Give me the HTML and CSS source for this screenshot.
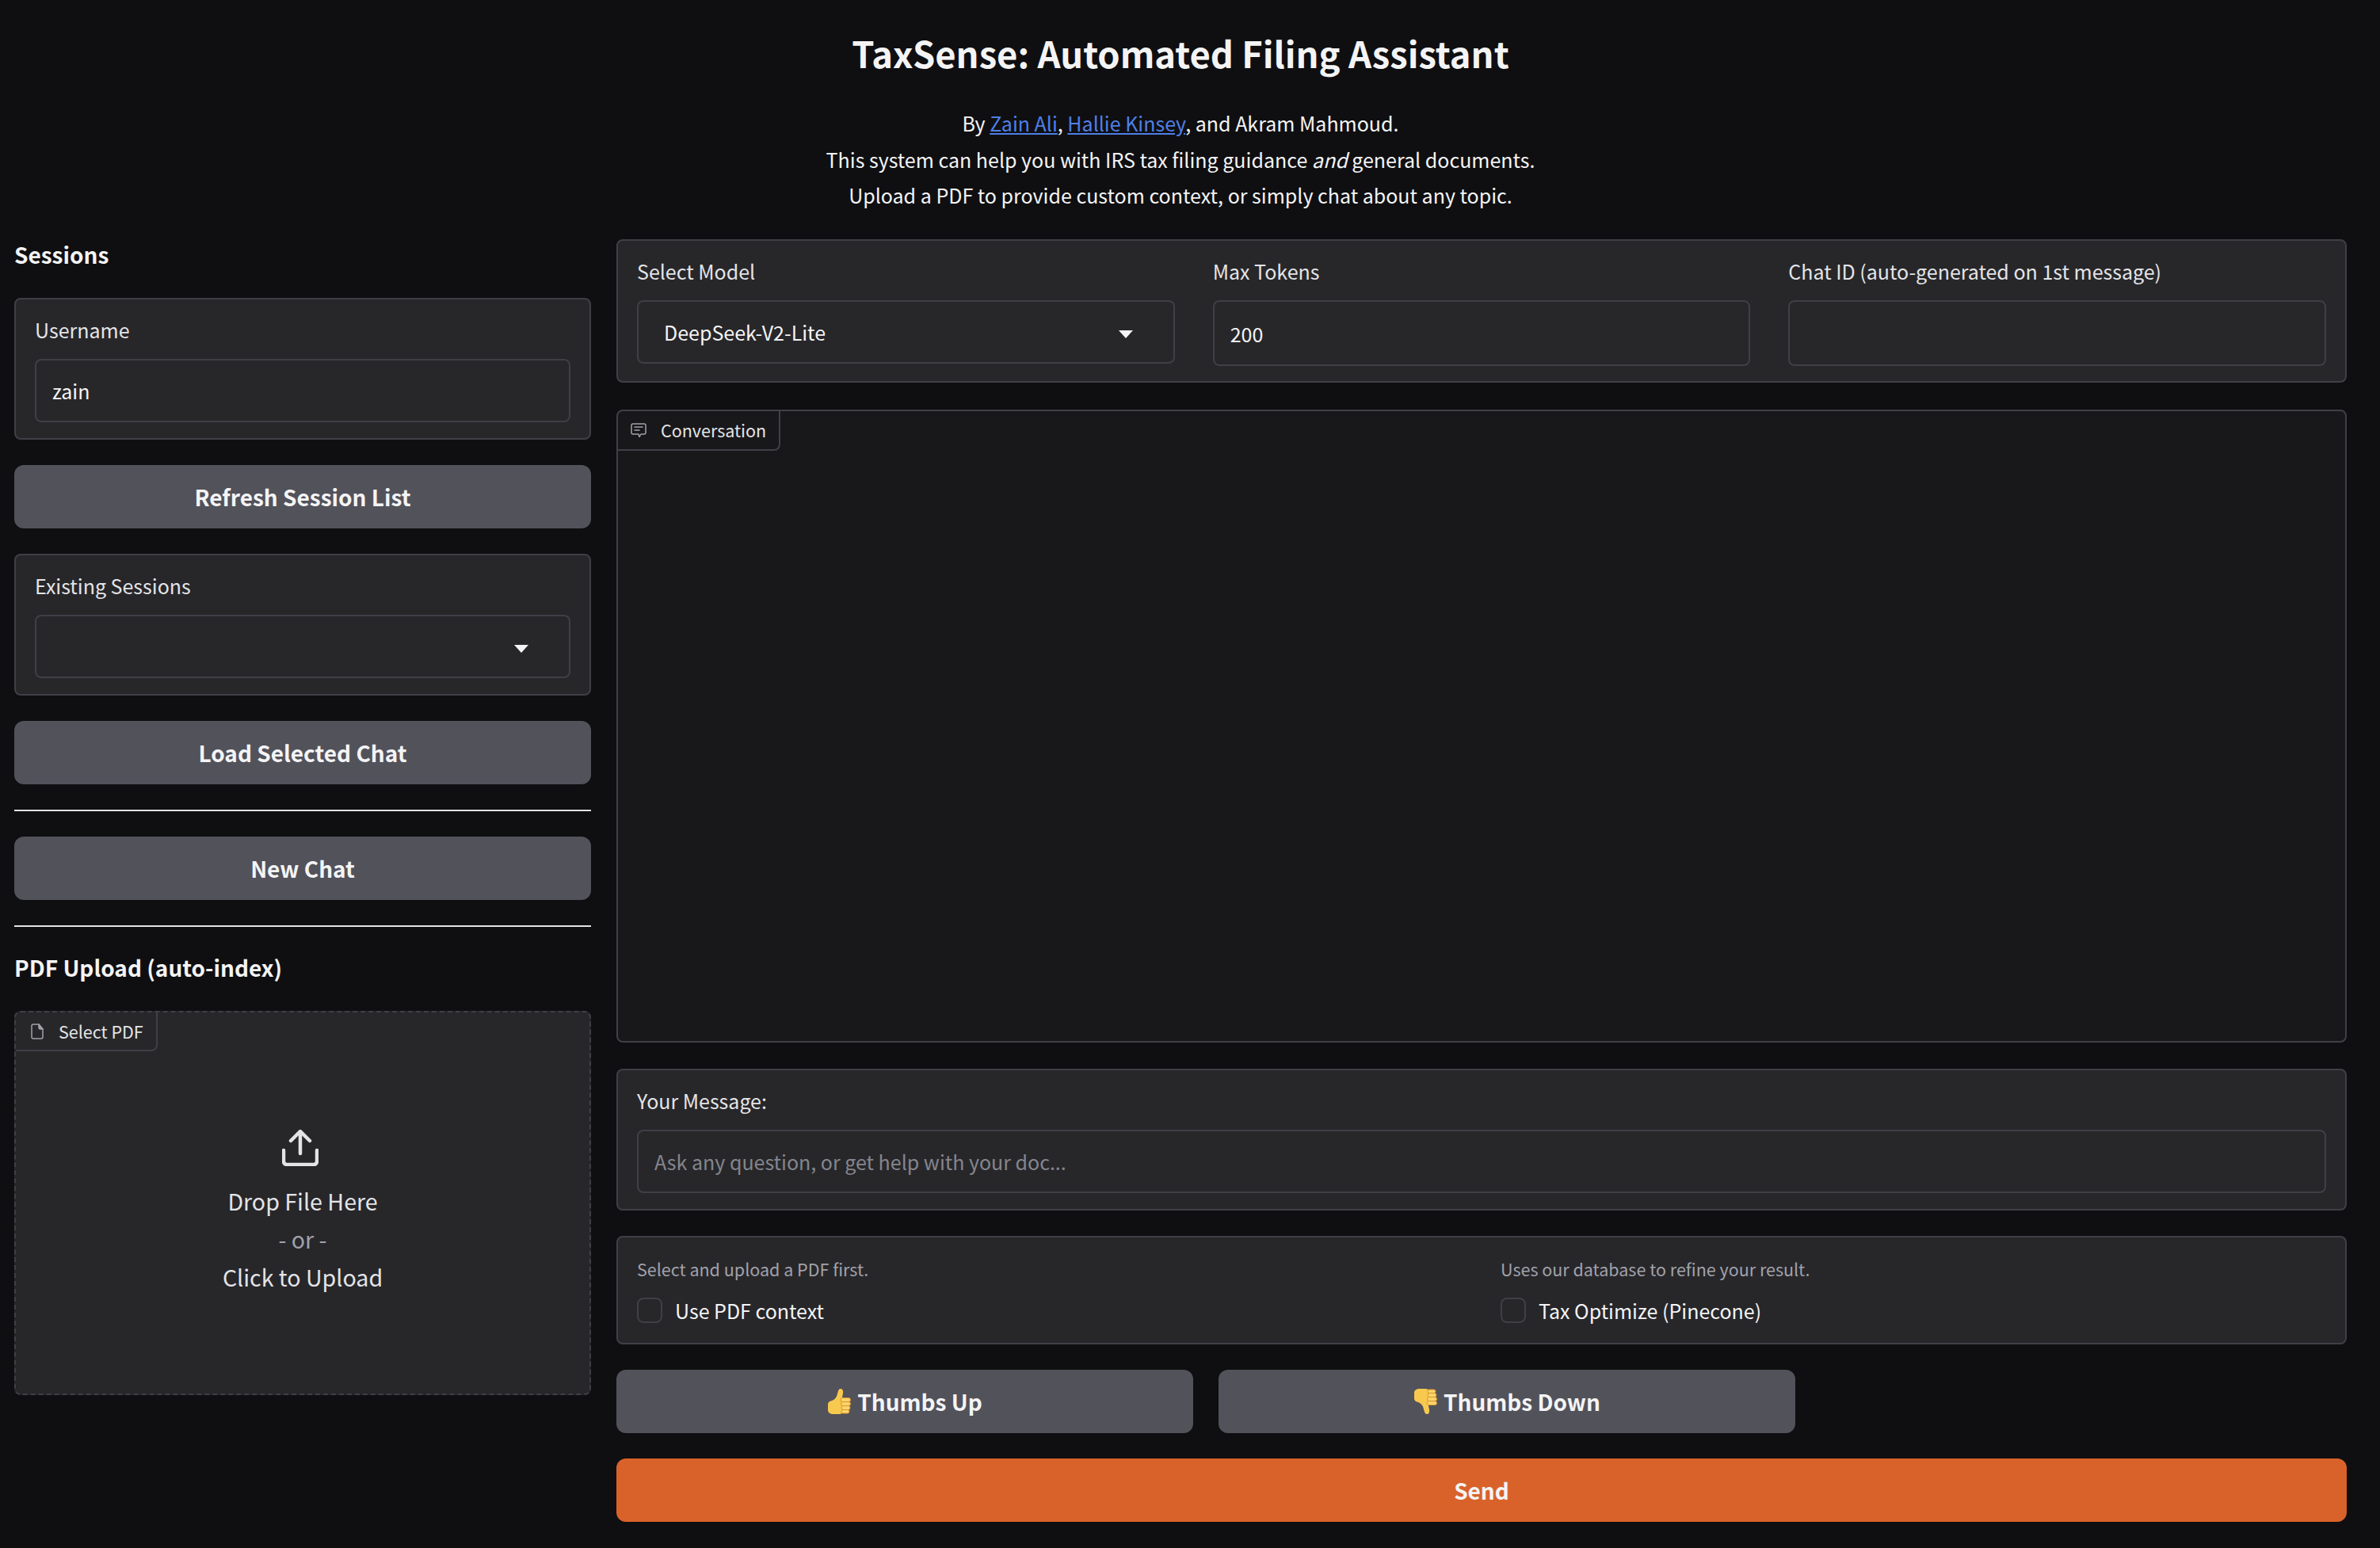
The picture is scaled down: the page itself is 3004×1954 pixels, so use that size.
FILE: index.html
```html
<!DOCTYPE html>
<html lang="en">
<head>
    <meta charset="UTF-8">
    <title>TaxSense: Automated Filing Assistant</title>
    <link rel="stylesheet" href="styles.css">
</head>
<body>

<header class="intro">
    <h1>TaxSense: Automated Filing Assistant</h1>
    <p>By <a href="#">Zain Ali</a>, <a href="#">Hallie Kinsey</a>, and Akram Mahmoud.</p>
    <p>This system can help you with IRS tax filing guidance <em>and</em> general documents.</p>
    <p>Upload a PDF to provide custom context, or simply chat about any topic.</p>
</header>

<div class="app">
    <aside class="sidebar">
        <h3 class="side-title">Sessions</h3>

        <div class="block">
            <label class="field-label">Username</label>
            <div class="input">zain</div>
        </div>

        <button class="btn">Refresh Session List</button>

        <div class="block">
            <label class="field-label">Existing Sessions</label>
            <div class="input select"><span></span><i class="caret"></i></div>
        </div>

        <button class="btn">Load Selected Chat</button>
        <hr class="rule">
        <button class="btn">New Chat</button>
        <hr class="rule">

        <h3 class="side-title">PDF Upload (auto-index)</h3>

        <div class="dropzone">
            <div class="tab file-tab">
                <svg class="file-icon" viewBox="0 0 16 20" fill="none" stroke="currentColor" stroke-width="1.5" stroke-linejoin="round"><path d="M3 1h7l5 6v10a2 2 0 0 1-2 2H3a2 2 0 0 1-2-2V3a2 2 0 0 1 2-2z"/><path d="M10 1v4a2 2 0 0 0 2 2h3z" fill="currentColor"/></svg>
                Select PDF
            </div>
            <div class="drop-body">
                <svg class="upload-icon" viewBox="0 0 46 46" fill="none" stroke="currentColor" stroke-width="4.5" stroke-linecap="round" stroke-linejoin="round"><path d="M23 30V3"/><path d="M11 14 23 2l12 12"/><path d="M2 26v14a4 4 0 0 0 4 4h34a4 4 0 0 0 4-4V26"/></svg>
                <span class="drop-line">Drop File Here</span>
                <span class="drop-line drop-or">- or -</span>
                <span class="drop-line">Click to Upload</span>
            </div>
        </div>
    </aside>

    <main class="main">
        <section class="block settings">
            <div>
                <label class="field-label">Select Model</label>
                <div class="input select model"><span>DeepSeek-V2-Lite</span><i class="caret"></i></div>
            </div>
            <div>
                <label class="field-label">Max Tokens</label>
                <div class="input number">200</div>
            </div>
            <div>
                <label class="field-label">Chat ID (auto-generated on 1st message)</label>
                <div class="input number"></div>
            </div>
        </section>

        <section class="chat">
            <div class="tab chat-tab">
                <svg class="chat-icon" viewBox="0 0 20 18" fill="none" stroke="currentColor" stroke-width="1.5" stroke-linejoin="round" stroke-linecap="round"><path d="M3 1h14a2 2 0 0 1 2 2v9a2 2 0 0 1-2 2h-4l-2 3.500-1-3.500H3a2 2 0 0 1-2-2V3a2 2 0 0 1 2-2z"/><path d="M5 5h10M5 9h6"/></svg>
                Conversation
            </div>
        </section>

        <section class="block message">
            <label class="field-label">Your Message:</label>
            <div class="input placeholder">Ask any question, or get help with your doc...</div>
        </section>

        <section class="block options">
            <div>
                <p class="hint">Select and upload a PDF first.</p>
                <label class="check"><span class="box"></span>Use PDF context</label>
            </div>
            <div>
                <p class="hint">Uses our database to refine your result.</p>
                <label class="check"><span class="box"></span>Tax Optimize (Pinecone)</label>
            </div>
        </section>

        <div class="feedback">
            <button class="btn">
                <svg class="emoji" viewBox="0 0 30 34">
                    <path fill="#f8c94f" d="M1 21c0-2.500 1.500-4 3.500-4.500 3-.8 6-2.500 7.500-6l1.500-5c.6-2.500 1.500-4.500 3.500-4.500 2.500 0 3.500 2.500 3 5.500l-1 5.500 3 3v16c-3 1.500-6 2-9 2H8c-4 0-7-2-7-5z"/>
                    <g fill="#fbd468" stroke="#d9962e" stroke-width="1">
                        <rect x="17" y="12.500" width="12.500" height="5" rx="2.500"/>
                        <rect x="17.500" y="17.500" width="12" height="5" rx="2.500"/>
                        <rect x="18" y="22.500" width="11" height="5" rx="2.500"/>
                        <rect x="18" y="27.500" width="10" height="4.500" rx="2.250"/>
                    </g>
                </svg>
                Thumbs Up
            </button>
            <button class="btn">
                <svg class="emoji down" viewBox="0 0 30 34">
                    <path fill="#f8c94f" d="M1 21c0-2.500 1.500-4 3.500-4.500 3-.8 6-2.500 7.500-6l1.500-5c.6-2.500 1.500-4.500 3.500-4.500 2.500 0 3.500 2.500 3 5.500l-1 5.500 3 3v16c-3 1.500-6 2-9 2H8c-4 0-7-2-7-5z"/>
                    <g fill="#fbd468" stroke="#d9962e" stroke-width="1">
                        <rect x="17" y="12.500" width="12.500" height="5" rx="2.500"/>
                        <rect x="17.500" y="17.500" width="12" height="5" rx="2.500"/>
                        <rect x="18" y="22.500" width="11" height="5" rx="2.500"/>
                        <rect x="18" y="27.500" width="10" height="4.500" rx="2.250"/>
                    </g>
                </svg>
                Thumbs Down
            </button>
        </div>

        <button class="btn send">Send</button>
    </main>
</div>

</body>
</html>
```

FILE: styles.css
```css
* {
    box-sizing: border-box;
    margin: 0;
    padding: 0;
}

body {
    background: #0f0f11;
    color: #f4f4f5;
    font-family: "Noto Sans CJK SC", "Noto Sans", sans-serif;
    font-size: 25px;
    line-height: 40px;
    padding: 0 42px 33px 18px;
}

.intro {
    text-align: center;
    padding-top: 34px;
    height: 271px;
}

.intro h1 {
    font-size: 45.3px;
    line-height: 64px;
    font-weight: 600;
    margin-bottom: 35px;
}

.intro p {
    line-height: 45.5px;
}

.intro a {
    color: #4f7fe8;
}

.app {
    display: flex;
    gap: 32px;
    margin-top: 31px;
}

.sidebar {
    width: 728px;
    flex-shrink: 0;
    display: flex;
    flex-direction: column;
    gap: 32px;
}

.main {
    flex: 1;
    display: flex;
    flex-direction: column;
    gap: 32px;
}

.side-title {
    font-size: 28px;
    line-height: 38px;
    font-weight: 600;
    margin-bottom: 4px;
}

.block {
    background: #27272a;
    border: 2px solid #3f3f46;
    border-radius: 8px;
    padding: 24px 24px 20px;
}

.field-label {
    display: block;
    color: #e4e4e7;
    line-height: 28px;
    margin-bottom: 23px;
}

.input {
    height: 80px;
    border: 2px solid #3f3f46;
    border-radius: 8px;
    padding: 0 20px;
    display: flex;
    align-items: center;
    color: #f4f4f5;
}

.select {
    justify-content: space-between;
    padding-right: 51px;
}

.model {
    padding-left: 32px;
}

.number {
    height: 83px;
}

.caret {
    width: 0;
    height: 0;
    margin-top: 5px;
    border-left: 9px solid transparent;
    border-right: 9px solid transparent;
    border-top: 10px solid #f4f4f5;
}

.placeholder {
    color: #85858d;
}

.btn {
    height: 80px;
    width: 100%;
    border: none;
    border-radius: 12px;
    background: #52525b;
    color: #f4f4f5;
    font-family: inherit;
    font-size: 28px;
    font-weight: 600;
    display: flex;
    align-items: center;
    justify-content: center;
    gap: 8px;
}

.send {
    background: #d9622b;
}

.rule {
    border: none;
    border-top: 2px solid #e4e4e7;
}

.tab {
    position: absolute;
    top: 0;
    left: 0;
    display: flex;
    align-items: center;
    font-size: 21.5px;
    border-right: 2px solid #3f3f46;
    border-bottom: 2px solid #3f3f46;
    border-radius: 0 0 8px 0;
    color: #e4e4e7;
}

.file-icon {
    width: 16px;
    height: 20px;
    color: #a1a1aa;
}

.chat-icon {
    width: 20px;
    height: 18px;
    color: #a1a1aa;
}

.dropzone {
    position: relative;
    height: 485px;
    background: #27272a;
    border: 2px dashed #3f3f46;
    border-radius: 8px;
}

.file-tab {
    width: 179px;
    height: 49px;
    padding-left: 19px;
    gap: 19px;
}

.drop-body {
    height: 100%;
    padding-top: 148px;
    display: flex;
    flex-direction: column;
    align-items: center;
    color: #e4e4e7;
}

.upload-icon {
    width: 46px;
    height: 46px;
    margin-left: -6px;
    margin-bottom: 20px;
}

.drop-line {
    font-size: 28.6px;
    line-height: 48px;
}

.drop-or {
    color: #a1a1aa;
}

.settings {
    display: grid;
    grid-template-columns: repeat(3, 1fr);
    gap: 48px;
    height: 181px;
    margin-bottom: 2px;
}

.chat {
    position: relative;
    height: 799px;
    background: #18181b;
    border: 2px solid #3f3f46;
    border-radius: 8px;
}

.chat-tab {
    width: 205px;
    height: 50px;
    padding-left: 16px;
    gap: 18px;
}

.message {
    margin-top: 1px;
    height: 179px;
}

.options {
    display: grid;
    grid-template-columns: 1fr 1fr;
    gap: 48px;
    height: 137px;
    padding-top: 22px;
}

.hint {
    font-size: 21.5px;
    line-height: 36px;
    color: #a1a1aa;
    margin-bottom: 16px;
}

.check {
    display: flex;
    align-items: center;
    gap: 16px;
    line-height: 36px;
}

.box {
    width: 32px;
    height: 32px;
    border: 2px solid #3f3f46;
    border-radius: 8px;
}

.feedback {
    display: flex;
    gap: 32px;
}

.feedback .btn {
    width: 728px;
}

.emoji {
    width: 30px;
    height: 34px;
}

.down {
    transform: scaleY(-1);
}
```
